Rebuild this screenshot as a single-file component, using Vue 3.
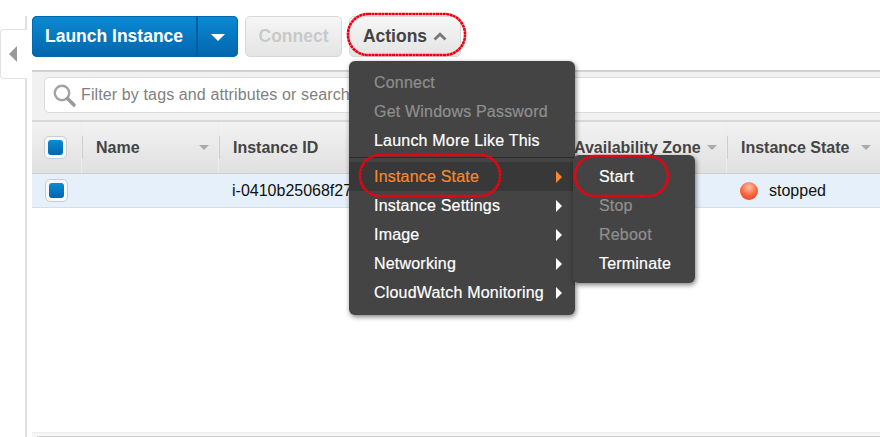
<template>
    <div class="console">
        <!-- 왼쪽 사이드바 토글 -->
        <aside class="sidebar">
            <div class="side-tab"><span class="side-arrow"></span></div>
        </aside>

        <main class="content">
            <div class="toolbar">
                <div class="launch-group">
                    <button class="launch-main">Launch Instance</button>
                    <button class="launch-caret"><span class="caret-down"></span></button>
                </div>
                <button class="tool-btn connect">Connect</button>
                <button class="tool-btn actions">
                    Actions
                    <svg class="chevron" width="14" height="9" viewBox="0 0 14 9">
                        <path d="M1.5 7.5 L7 2.2 L12.5 7.5" fill="none" stroke="#777" stroke-width="2.8" />
                    </svg>
                </button>
            </div>

            <div class="filter-bar">
                <div class="filter-input">
                    <svg width="24" height="24" viewBox="0 0 24 24">
                        <circle cx="10" cy="10" r="7.2" fill="none" stroke="#a3a3a3" stroke-width="2.4" />
                        <path d="M15.5 15.5 L22 22" stroke="#999" stroke-width="3.6" stroke-linecap="round" />
                    </svg>
                    <span class="filter-text">Filter by tags and attributes or search</span>
                </div>
            </div>

            <div class="table-head">
                <div class="head-cell check-cell"><span class="check"></span></div>
                <div v-for="col in columns" :key="col.width" class="head-cell" :style="{ width: col.width + 'px' }">
                    <span class="head-label">{{ col.label }}</span>
                    <span v-if="col.label" class="sort-caret"></span>
                </div>
            </div>

            <div class="table-row">
                <div class="row-check"><span class="check"></span></div>
                <div class="row-name"></div>
                <div class="row-id">i-0410b25068f27</div>
                <div class="row-spacer"></div>
                <div class="row-state"><span class="state-dot"></span>stopped</div>
            </div>

            <div class="table-space"></div>
            <div class="bottom-bar"><div class="scroll-line"></div></div>
        </main>

        <!-- Actions 메뉴 -->
        <div class="menu actions-menu">
            <template v-for="item in menuItems" :key="item.label">
                <div class="menu-item" :class="{ disabled: item.disabled, active: item.active }">
                    <span>{{ item.label }}</span>
                    <span v-if="item.sub" class="sub-arrow"></span>
                </div>
                <div v-if="item.divider" class="menu-divider"></div>
            </template>
        </div>

        <!-- Instance State 서브메뉴 -->
        <div class="menu state-menu">
            <div v-for="item in stateItems" :key="item.label" class="menu-item" :class="{ disabled: item.disabled }">
                {{ item.label }}
            </div>
        </div>

        <!-- 빨간 표시 -->
        <svg class="marks" width="880" height="437" viewBox="0 0 880 437">
            <rect v-for="m in marks" :key="m.x" :x="m.x" :y="m.y" :width="m.w" :height="m.h" :rx="m.r" class="mark" />
        </svg>
    </div>
</template>

<script setup>
const columns = [
    { label: "Name", width: 137 },
    { label: "Instance ID", width: 175 },
    { label: "", width: 166 },
    { label: "Availability Zone", width: 167 },
    { label: "Instance State", width: 154 },
];

const menuItems = [
    { label: "Connect", disabled: true },
    { label: "Get Windows Password", disabled: true },
    { label: "Launch More Like This", divider: true },
    { label: "Instance State", sub: true, active: true },
    { label: "Instance Settings", sub: true },
    { label: "Image", sub: true },
    { label: "Networking", sub: true },
    { label: "CloudWatch Monitoring", sub: true },
];

const stateItems = [
    { label: "Start" },
    { label: "Stop", disabled: true },
    { label: "Reboot", disabled: true },
    { label: "Terminate" },
];

const marks = [
    { x: 348, y: 14, w: 117, h: 41, r: 20 },
    { x: 360, y: 155, w: 140, h: 41, r: 20 },
    { x: 575, y: 156, w: 93, h: 40, r: 20 },
];
</script>

<style>
html,
body {
    margin: 0;
    background: #fff;
}
</style>

<style scoped>
.console {
    position: relative;
    display: flex;
    width: 880px;
    height: 437px;
    overflow: hidden;
    background: #fff;
    font-family: "Liberation Sans", Arial, sans-serif;
    font-size: 16px;
    color: #222;
}

.sidebar {
    flex: none;
    box-sizing: border-box;
    width: 27px;
    margin: 16px 5px 0 0;
    padding-top: 13px;
    border-right: 2px solid #e0e0e0;
}

.side-tab {
    box-sizing: border-box;
    display: flex;
    align-items: center;
    justify-content: center;
    width: 27px;
    height: 50px;
    padding-right: 2px;
    background: #fff;
    border: 1px solid #e2e2e2;
    border-right: none;
    border-radius: 4px 0 0 4px;
}

.side-arrow {
    width: 0;
    height: 0;
    border-top: 8px solid transparent;
    border-bottom: 8px solid transparent;
    border-right: 8px solid #999;
}

.content {
    flex: 1;
    min-width: 0;
    display: flex;
    flex-direction: column;
    padding-top: 16px;
}

.toolbar {
    display: flex;
    gap: 7px;
    height: 41px;
    margin-bottom: 13px;
    flex: none;
}

.launch-group {
    display: flex;
    width: 206px;
    border-radius: 5px;
    overflow: hidden;
    background: linear-gradient(#0a8bd4, #0265ad);
    box-shadow: inset 0 0 0 1px #0468ad;
}

.launch-main,
.launch-caret {
    border: none;
    background: none;
    padding: 0;
    color: #fff;
    font: bold 17.5px "Liberation Sans", Arial, sans-serif;
}

.launch-main {
    width: 164px;
    text-align: center;
    padding-left: 0;
}

.launch-caret {
    flex: 1;
    display: flex;
    align-items: center;
    justify-content: center;
    border-left: 2px solid #045d9e;
}

.caret-down {
    width: 0;
    height: 0;
    margin-top: 2px;
    border-left: 7px solid transparent;
    border-right: 7px solid transparent;
    border-top: 7px solid #fff;
}

.tool-btn {
    padding: 0;
    border: 1px solid #d8d8d8;
    border-radius: 5px;
    background: linear-gradient(#f6f6f6, #e4e4e4);
    font: bold 17.5px "Liberation Sans", Arial, sans-serif;
}

.connect {
    width: 97px;
    color: #c9c9c9;
}

.actions {
    width: 112px;
    color: #444;
    display: flex;
    align-items: center;
    justify-content: center;
    gap: 6px;
}

.filter-bar {
    flex: none;
    box-sizing: border-box;
    height: 52px;
    padding: 5px 0 9px 12px;
    background: #f1f1f1;
    border-top: 2px solid #d2d2d2;
    border-bottom: 2px solid #d8d8d8;
}

.filter-input {
    box-sizing: border-box;
    display: flex;
    align-items: center;
    gap: 5px;
    width: 860px;
    height: 36px;
    padding-left: 7px;
    background: #fff;
    border: 1px solid #dcdcdc;
    border-radius: 5px;
    color: #7f7f7f;
    white-space: nowrap;
}

.filter-text {
    letter-spacing: 0.12px;
}

.table-head {
    flex: none;
    display: flex;
    height: 52px;
    background: linear-gradient(#f2f2f2, #e0e0e0);
    border-bottom: 1px solid #cfcfcf;
    box-sizing: border-box;
}

.head-cell {
    flex: none;
    box-sizing: border-box;
    position: relative;
    display: flex;
    align-items: center;
    justify-content: space-between;
    padding: 0 9px 0 14px;
    font-weight: bold;
    color: #444;
    white-space: nowrap;
    border-left: 1px solid #ececec;
}

/* 헤더 구분선 */
.head-cell::before {
    content: "";
    position: absolute;
    left: 0;
    top: 14px;
    bottom: 14px;
    width: 1px;
    background: #cdcdcd;
}

.check-cell {
    width: 49px;
    padding: 0 0 0 12px;
    border-left: none;
}

.check-cell::before {
    display: none;
}

.check {
    box-sizing: border-box;
    display: block;
    width: 23px;
    height: 23px;
    border: 1px solid #ccc;
    border-radius: 5px;
    background: #f7f7f7;
    position: relative;
}

.check::after {
    content: "";
    position: absolute;
    inset: 3px;
    border-radius: 3px;
    background: linear-gradient(#0a8bd4, #0265ad);
}

.sort-caret {
    flex: none;
    width: 0;
    height: 0;
    border-left: 5px solid transparent;
    border-right: 5px solid transparent;
    border-top: 5px solid #aaa;
}

.table-row {
    flex: none;
    box-sizing: border-box;
    display: flex;
    align-items: center;
    height: 34px;
    background: #e6f0fa;
    border-bottom: 1px solid #d6dde4;
    white-space: nowrap;
    color: #111;
}

.row-check {
    width: 49px;
    padding-left: 13px;
    box-sizing: border-box;
}

.row-name {
    width: 137px;
}

.row-id {
    width: 175px;
    padding-left: 14px;
    box-sizing: border-box;
}

.row-spacer {
    width: 333px;
}

.row-state {
    display: flex;
    align-items: center;
    gap: 11px;
    padding-left: 14px;
}

.state-dot {
    width: 18px;
    height: 18px;
    border-radius: 50%;
    background: radial-gradient(circle at 50% 30%, #ffc0a8, #f9603a 55%, #e23a1e);
}

.table-space {
    flex: 1;
}

.bottom-bar {
    flex: none;
    height: 5px;
    padding-top: 3px;
    background: #f6f6f6;
    border-top: 1px solid #eee;
    box-sizing: border-box;
}

.scroll-line {
    height: 1px;
    margin-left: 5px;
    background: #cfcfcf;
}

.menu {
    position: absolute;
    box-sizing: border-box;
    background: #444;
    border-radius: 6px;
    box-shadow: 1px 2px 5px rgba(0, 0, 0, 0.5);
    color: #fff;
    white-space: nowrap;
    letter-spacing: 0.2px;
    -webkit-text-stroke: 0.2px;
}

.actions-menu {
    left: 349px;
    top: 61px;
    width: 226px;
    height: 254px;
    padding-top: 7px;
}

.state-menu {
    left: 573px;
    top: 155px;
    width: 122px;
    height: 128px;
    padding-top: 7px;
}

.menu-item {
    display: flex;
    align-items: center;
    justify-content: space-between;
    height: 29px;
    padding: 0 13px 0 25px;
}

.state-menu .menu-item {
    padding-left: 26px;
}

.menu-item.disabled {
    color: #8f8f8f;
}

.menu-item.active {
    background: #383838;
    color: #f7882f;
}

.menu-divider {
    height: 4px;
    margin-top: 2px;
    border-top: 1px solid #2c2c2c;
}

.sub-arrow {
    width: 0;
    height: 0;
    border-top: 6px solid transparent;
    border-bottom: 6px solid transparent;
    border-left: 6px solid currentColor;
}

.marks {
    position: absolute;
    left: 0;
    top: 0;
    pointer-events: none;
}

.mark {
    fill: none;
    stroke: #f00010;
    stroke-width: 2.6;
    stroke-dasharray: 3 0.4;
}
</style>
